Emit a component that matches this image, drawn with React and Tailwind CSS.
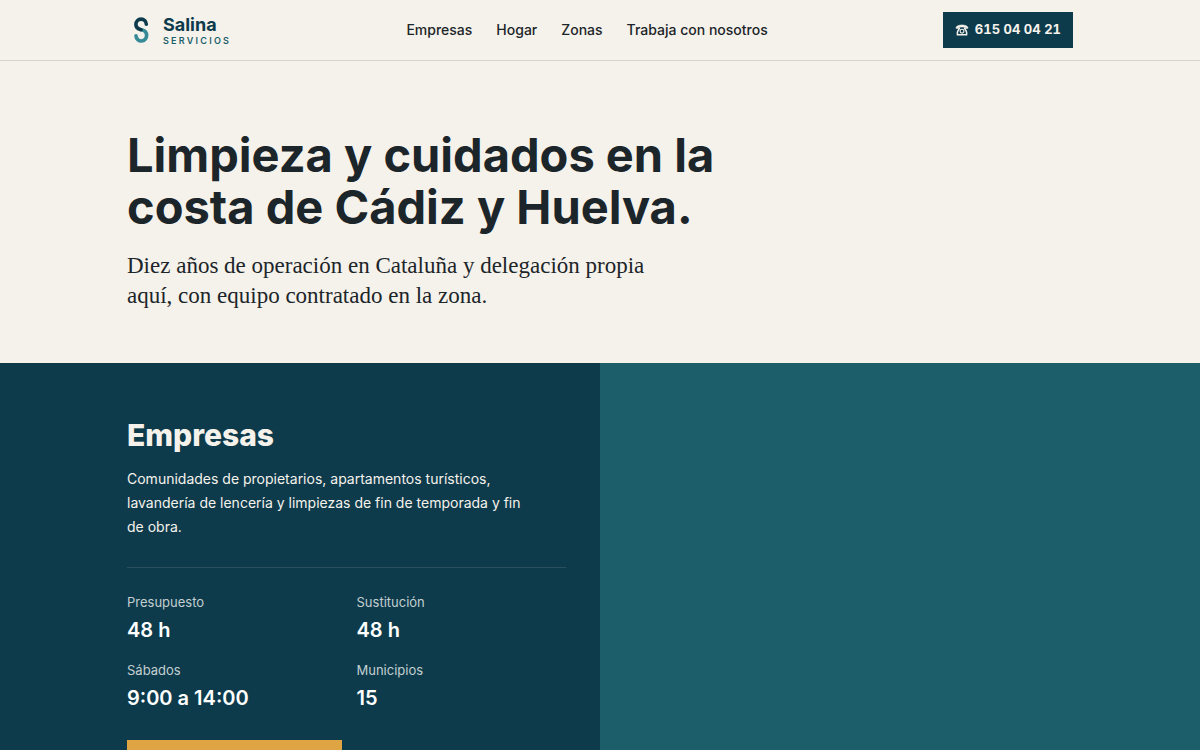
const links = ["Empresas", "Hogar", "Zonas", "Trabaja con nosotros"];

const facts = [
  ["Presupuesto", "48 h"],
  ["Sustitución", "48 h"],
  ["Sábados", "9:00 a 14:00"],
  ["Municipios", "15"],
];

function Logo() {
  return (
    <svg viewBox="0 0 20 28" className="h-7 w-5" fill="none" strokeWidth="3.6" strokeLinecap="round" aria-hidden="true">
      <path d="M10.6 13.8 C14 14.5 15.6 16.6 15.6 19.4 A5.3 5.3 0 0 1 5 19.9" stroke="#368b97" />
      <path d="M15.3 8.2 A5.2 5.2 0 0 0 4.9 8.4 C4.9 11.2 6.8 13 10 13.7" stroke="#0d3b4c" />
    </svg>
  );
}

function Phone() {
  return (
    <svg viewBox="0 0 14 12" className="h-3 w-3.5" fill="none" stroke="currentColor" aria-hidden="true">
      <path d="M.9 4.2 C.9 -.1 13.1 -.1 13.1 4.2 L10.6 4.6 L10.2 3 H3.8 L3.4 4.6 Z" fill="currentColor" strokeWidth=".6" />
      <path d="M4.6 3.4 C4.4 5.6 2.6 6.4 2.4 8.4 V10.8 H11.6 V8.4 C11.4 6.4 9.6 5.6 9.4 3.4" strokeWidth="1.5" />
      <circle cx="7" cy="7.2" r="1.9" strokeWidth="1.1" />
    </svg>
  );
}

export default function App() {
  return (
    <div className="min-h-screen bg-[#f5f2eb] font-['Inter',sans-serif] text-[#1c2529]">
      <header className="border-b border-[#d6d6d1] px-6">
        <div className="mx-auto flex h-15 max-w-[946px] items-center justify-between">
          <a href="#" className="flex items-center gap-3 pl-1">
            <Logo />
            <span className="flex flex-col pt-px">
              <span className="text-lg leading-5 font-bold text-[#0d3b4c]">Salina</span>
              <span className="text-[9px] leading-3 font-semibold tracking-[0.25em] text-[#1c5f6b]">SERVICIOS</span>
            </span>
          </a>
          <nav className="flex gap-6 text-sm font-medium">
            {links.map((label) => (
              <a key={label} href="#">{label}</a>
            ))}
          </nav>
          <a href="tel:615040421" className="flex h-9 items-center gap-1.5 bg-[#0d3b4c] px-3 text-[13px] font-bold text-[#f5f2eb] tabular-nums">
            <Phone />
            615 04 04 21
          </a>
        </div>
      </header>

      <main>
        <section className="px-6 pt-17 pb-13">
          <div className="mx-auto max-w-[946px]">
            <h1 className="max-w-[640px] text-[47px] leading-[52px] font-bold">
              Limpieza y cuidados en la costa de Cádiz y Huelva.
            </h1>
            <p className="mt-[18px] max-w-[540px] font-['Liberation_Serif',serif] text-[23px] leading-[30px]">
              Diez años de operación en Cataluña y delegación propia aquí, con equipo contratado en la zona.
            </p>
          </div>
        </section>

        <div className="grid grid-cols-2">
          <section className="bg-[#0d3b4c] pt-13 pr-[34px] pb-14 pl-[max(24px,calc((100vw-946px)/2))] text-[#f5f2eb]">
            <h2 id="empresas" className="text-[30px] leading-10 font-extrabold">Empresas</h2>
            <p className="mt-3 max-w-[406px] text-sm leading-6">
              Comunidades de propietarios, apartamentos turísticos, lavandería de lencería y limpiezas de fin de temporada y fin de obra.
            </p>
            <dl className="mt-7 grid grid-cols-2 gap-x-5 gap-y-4 border-t border-[#2a505e] pt-6">
              {facts.map(([name, value]) => (
                <div key={name}>
                  <dt className="text-[13px] leading-5 text-[#c3cfd0]">{name}</dt>
                  <dd className="mt-1 text-xl leading-7 font-semibold text-white">{value}</dd>
                </div>
              ))}
            </dl>
            <a href="#" aria-labelledby="empresas" className="mt-7 block h-12 w-[215px] bg-[#dfa545]" />
          </section>
          <section className="bg-[#1c5f6b]" />
        </div>
      </main>
    </div>
  );
}
